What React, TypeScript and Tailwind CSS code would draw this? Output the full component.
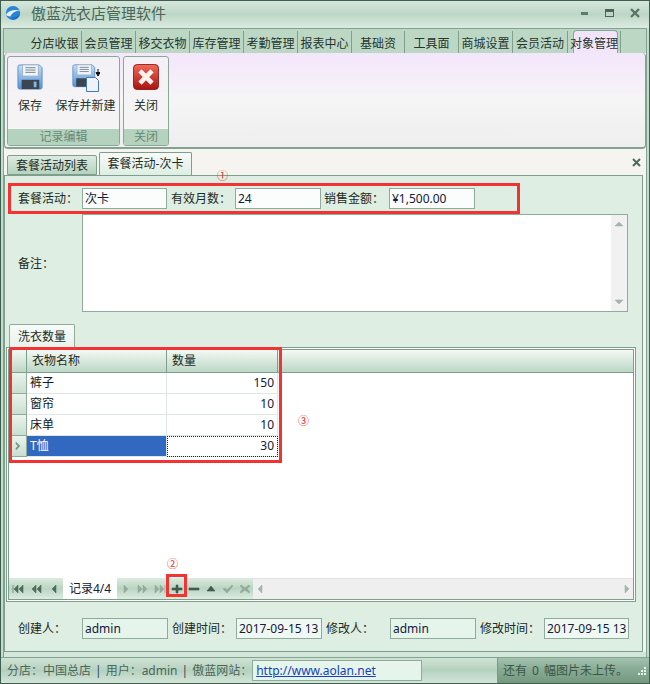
import React from "react";

const font = { fontFamily: '"Noto Sans","Noto Sans CJK SC",sans-serif' };

const menus: { t: string; w: string }[] = [
  { t: "分店收银", w: "w-[54px]" },
  { t: "会员管理", w: "w-[54px]" },
  { t: "移交衣物", w: "w-[54px]" },
  { t: "库存管理", w: "w-[54px]" },
  { t: "考勤管理", w: "w-[54px]" },
  { t: "报表中心", w: "w-[54px]" },
  { t: "基础资", w: "w-[53px]" },
  { t: "工具面", w: "w-[54px]" },
  { t: "商城设置", w: "w-[54px]" },
  { t: "会员活动", w: "w-[55px]" },
];

function Floppy() {
  return (
    <>
      <path d="M1 3a2 2 0 0 1 2-2h21l3 3v21a2 2 0 0 1-2 2H3a2 2 0 0 1-2-2z" fill="url(#sv)" stroke="#5b8fc8" />
      <rect x="6" y="1" width="17" height="12" fill="#f2f5f8" stroke="#9db4c8" />
      <path d="M9 4h11M9 6.500h11M9 9h11" stroke="#6d7b88" />
      <rect x="5" y="17" width="19" height="10" fill="#3b4650" />
      <rect x="18" y="19" width="3" height="6" fill="#8ab6e2" />
    </>
  );
}

function Grad() {
  return (
    <defs>
      <linearGradient id="sv" x1="0" y1="0" x2="0" y2="1">
        <stop offset="0" stopColor="#c6def6" />
        <stop offset="1" stopColor="#4f93dc" />
      </linearGradient>
    </defs>
  );
}

function Save() {
  return (
    <svg width="26" height="26" viewBox="0 0 28 28" className="block">
      <Grad />
      <Floppy />
    </svg>
  );
}

function SaveNew() {
  return (
    <svg width="28" height="28" viewBox="0 0 28 28" className="block">
      <Grad />
      <g transform="scale(0.84)">
        <Floppy />
      </g>
      <path d="M14.500 13.500h9l3 3v11h-12z" fill="#eef3fa" stroke="#4877b8" />
      <path d="M26 5v5M24 8.500l2 3.500 2-3.500z" stroke="#111" fill="#111" />
    </svg>
  );
}

function CloseIcon() {
  return (
    <svg width="26" height="26" viewBox="0 0 28 28" className="block">
      <defs>
        <linearGradient id="rd" x1="0" y1="0" x2="0" y2="1">
          <stop offset="0" stopColor="#ef6a5a" />
          <stop offset="1" stopColor="#a81410" />
        </linearGradient>
      </defs>
      <rect x="0.500" y="0.500" width="27" height="27" rx="4" fill="url(#rd)" stroke="#8c1c16" />
      <path d="M7.500 7.500l13 13M20.500 7.500l-13 13" stroke="#fdf3ee" strokeWidth="5" />
    </svg>
  );
}

function Field({ v, w = "w-[85px]", bg = "bg-[#fbfdfc]" }: { v: string; w?: string; bg?: string }) {
  return (
    <div className={`${w} ${bg} h-[21px] shrink-0 border border-[#8fab9a] pl-[2px] text-[12px] leading-[19px] text-[#10203a] overflow-hidden whitespace-nowrap`}>
      {v}
    </div>
  );
}

function Label({ t, w }: { t: string; w: string }) {
  return <div className={`${w} shrink-0 text-[12px] leading-[21px] text-[#1c2a22] whitespace-nowrap`}>{t}</div>;
}

function Tri({ d, c = "#4c6d5a" }: { d: string; c?: string }) {
  return (
    <svg width="12" height="10" viewBox="0 0 12 10" className="block">
      <path d={d} fill={c} stroke={c} strokeWidth="0.600" />
    </svg>
  );
}

function NavBtn({ d, c, w = "w-[17px]" }: { d: string; c?: string; w?: string }) {
  return (
    <div className={`${w} h-full flex items-center justify-center`}>
      <Tri d={d} c={c} />
    </div>
  );
}

const navGreen = "bg-gradient-to-b from-[#dcecdf] via-[#b9d4c2] to-[#dcecdf]";

function RibbonGroup({ w, caption, children }: { w: string; caption: string; children: React.ReactNode }) {
  return (
    <div className={`${w} h-[90px] flex flex-col rounded-[3px] border border-[#8aa896] overflow-hidden bg-gradient-to-b from-[#f3f1f6] to-[#f6f5f4]`}>
      <div className="flex-1 flex">{children}</div>
      <div className="h-[16px] bg-[#b5d2be] text-center text-[12px] leading-[16px] text-[#688a77]">{caption}</div>
    </div>
  );
}

function RibbonBtn({ w, label, children }: { w: string; label: string; children: React.ReactNode }) {
  return (
    <div className={`${w} flex flex-col items-center pt-[7px]`}>
      <div className="h-[26px]">{children}</div>
      <div className="mt-[7px] text-[12px] leading-[18px] text-[#26332c] whitespace-nowrap">{label}</div>
    </div>
  );
}

function Row({ name, qty, active }: { name: string; qty: string; active?: boolean }) {
  return (
    <div className="flex h-[21px]">
      <div className="w-[18px] shrink-0 border-r border-b border-[#8faa99] bg-gradient-to-b from-[#eaf3ec] to-[#c9dfd0] flex items-center justify-center">
        {active && <Tri d="M4 1l4 4-4 4V7l2-2-2-2z" c="#7b9c88" />}
      </div>
      <div className={`w-[140px] shrink-0 border-r border-b border-[#dde8e0] pl-[3px] text-[12px] leading-[20px] ${active ? "bg-[#3168c0] text-white" : "bg-white text-[#14201a]"}`}>
        {name}
      </div>
      <div className={`w-[111px] shrink-0 border-b border-r border-[#dde8e0] pr-[3px] text-right text-[12px] leading-[20px] text-[#10203a] ${active ? "outline-1 outline-dotted -outline-offset-1 outline-[#222]" : ""}`}>
        {qty}
      </div>
    </div>
  );
}

export default function App() {
  return (
    <div style={font} className="relative w-[650px] h-[684px] flex flex-col border border-[#3f5e50] bg-[#c3dccb] overflow-hidden">
      {/* title bar */}
      <div className="h-[27px] shrink-0 flex items-center pb-[3px] bg-gradient-to-b from-[#d6e7dc] via-[#bcd6c5] to-[#dcebe1]">
        <svg width="16" height="16" viewBox="0 0 18 18" className="ml-[4px] block">
          <circle cx="9" cy="9" r="8" fill="#2a85d6" />
          <path d="M1 11C4 6 10 5 17 6 11 7 8 9 6 13 4 13 2 12 1 11z" fill="#e8f2f6" />
          <path d="M7 14c4 0 7-1 10-5-1 5-5 8-9 7z" fill="#1e6fc0" />
        </svg>
        <div className="ml-[10px] text-[15px] leading-[20px] text-[#4a6659]">傲蓝洗衣店管理软件</div>
        <div className="ml-auto flex items-center pr-[2px]">
          <div className="w-[25px] flex justify-center"><div className="w-[7px] h-[3px] bg-[#5f7a6c]" /></div>
          <div className="w-[25px] flex justify-center"><div className="w-[9px] h-[8px] border border-t-[3px] border-[#4b6658]" /></div>
          <div className="w-[25px] flex justify-center">
            <svg width="10" height="10" viewBox="0 0 10 10"><path d="M1 1l8 8M9 1L1 9" stroke="#5a7567" strokeWidth="2.400" /></svg>
          </div>
        </div>
      </div>

      {/* body */}
      <div className="flex-1 min-h-0 flex flex-col mx-[2px] border-x border-t border-[#82a391] bg-[#f6f4f0]">
        {/* menu tabs */}
        <div className="h-[24px] shrink-0 flex bg-[#bcd8c5] pl-[24px] pt-[2px]">
          {menus.map((m) => (
            <div key={m.t} className={`${m.w} h-[22px] border-r border-[#7fa08d] text-center text-[12px] leading-[25px] text-[#27352d] whitespace-nowrap`}>
              {m.t}
            </div>
          ))}
          <div className="w-[45px] ml-[5px] -mt-[1px] h-[23px] rounded-t-[4px] border border-b-0 border-[#8aa896] bg-gradient-to-b from-[#f0e3fa] to-[#f3e6fb] text-center text-[12px] leading-[26px] text-[#27352d] whitespace-nowrap">
            <span className="-ml-[4px]">对象管理</span>
          </div>
          <div className="h-[22px] w-[3px] border-r border-[#7fa08d]" />
        </div>

        {/* ribbon */}
        <div className="h-[96px] shrink-0 flex gap-[3px] pt-[3px] pl-[2px] rounded-[4px] border border-t-0 border-b-2 border-[#82a391] bg-gradient-to-b from-[#f3e6fb] via-[#f6f5f6] to-[#eeeeee]">
          <RibbonGroup w="w-[113px]" caption="记录编辑">
            <RibbonBtn w="w-[44px]" label="保存"><Save /></RibbonBtn>
            <RibbonBtn w="w-[67px]" label="保存并新建"><SaveNew /></RibbonBtn>
          </RibbonGroup>
          <RibbonGroup w="w-[46px]" caption="关闭">
            <RibbonBtn w="w-[44px]" label="关闭"><CloseIcon /></RibbonBtn>
          </RibbonGroup>
        </div>

        {/* doc tabs */}
        <div className="h-[26px] shrink-0 flex items-end pl-[3px]">
          <div className="w-[90px] h-[20px] rounded-t-[2px] border border-[#7f9f8d] bg-gradient-to-b from-[#dcebe0] to-[#b6d2bf] text-center text-[12px] leading-[19px] text-[#1f2c25]">套餐活动列表</div>
          <div className="w-[93px] h-[23px] ml-[2px] rounded-t-[2px] border border-b-0 border-[#7f9f8d] bg-gradient-to-b from-[#f7faf8] to-[#deeee3] text-center text-[12px] leading-[22px] text-[#1f2c25]">套餐活动-次卡</div>
          <svg width="9" height="9" viewBox="0 0 9 9" className="ml-auto mr-[5px] mb-[8px]"><path d="M1 1l7 7M8 1L1 8" stroke="#4c6b5b" strokeWidth="2" /></svg>
        </div>

        {/* doc pane */}
        <div className="flex-1 min-h-0 mr-[3px] border border-[#7f9f8d] bg-[#deeee3] flex flex-col">
          {/* row 1 */}
          <div className="h-[38px] shrink-0 flex items-start pl-[13px] pt-[12px]">
            <Label t="套餐活动：" w="w-[64px]" />
            <Field v="次卡" />
            <Label t="有效月数：" w="w-[68px] pl-[4px]" />
            <Field v="24" w="w-[86px]" />
            <Label t="销售金额：" w="w-[68px] pl-[3px]" />
            <Field v="¥1,500.00" w="w-[86px]" />
          </div>
          {/* notes */}
          <div className="h-[98px] shrink-0 flex items-center pl-[13px]">
            <Label t="备注：" w="w-[64px]" />
            <div className="w-[546px] h-[98px] border border-[#8fab9a] bg-white flex justify-end">
              <div className="w-[16px] h-full bg-[#f1f1f1] flex flex-col items-center justify-between py-[4px]">
                <Tri d="M2 7l4-4 4 4z" c="#a4b5aa" />
                <Tri d="M2 3l4 4 4-4z" c="#a4b5aa" />
              </div>
            </div>
          </div>
          {/* sub-tab */}
          <div className="h-[23px] mt-[12px] shrink-0 pl-[4px]">
            <div className="w-[66px] h-[23px] rounded-t-[2px] border border-b-0 border-[#8fab9a] bg-gradient-to-b from-[#f7faf8] to-[#e9f3ec] text-center text-[12px] leading-[23px] text-[#1c2a22]">洗衣数量</div>
          </div>
          {/* grid */}
          <div className="h-[255px] shrink-0 ml-[1px] w-[630px] border-[3px] border-double border-[#7f9f8d] bg-white flex flex-col">
            <div className="h-[23px] shrink-0 flex border-b border-[#7f9f8d] bg-gradient-to-b from-[#f4f9f5] to-[#bcd7c5]">
              <div className="w-[18px] border-r border-[#7f9f8d]" />
              <div className="w-[140px] border-r border-[#7f9f8d] pl-[5px] text-[12px] leading-[22px] text-[#1c2a22]">衣物名称</div>
              <div className="w-[111px] border-r border-[#7f9f8d] pl-[5px] text-[12px] leading-[22px] text-[#1c2a22]">数量</div>
            </div>
            <Row name="裤子" qty="150" />
            <Row name="窗帘" qty="10" />
            <Row name="床单" qty="10" />
            <Row name="T恤" qty="30" active />
            <div className="flex-1" />
            {/* navigator */}
            <div className="h-[21px] shrink-0 flex">
              <div className={`flex h-full items-center ${navGreen} w-[54px]`}>
                <NavBtn w="w-[18px]" d="M1 1v8M6 1L2 5l4 4zM11 1L7 5l4 4z" />
                <NavBtn w="w-[18px]" d="M6 1L2 5l4 4zM11 1L7 5l4 4z" />
                <NavBtn w="w-[18px]" d="M8 1L4 5l4 4z" />
              </div>
              <div className="w-[54px] bg-white text-[12px] leading-[21px] text-center text-[#10203a]">记录4/4</div>
              <div className={`flex h-full items-center ${navGreen} w-[136px]`}>
                <NavBtn d="M4 1l4 4-4 4z" c="#94ab9c" />
                <NavBtn d="M1 1l4 4-4 4zM6 1l4 4-4 4z" c="#94ab9c" />
                <NavBtn d="M1 1l4 4-4 4zM6 1l4 4-4 4zM11 1v8" c="#94ab9c" />
                <NavBtn d="M5 1h2v3h4v2H7v3H5V6H1V4h4z" c="#3f5c4d" />
                <NavBtn d="M1 4h10v2H1z" c="#3f5c4d" />
                <NavBtn d="M6 2l4 5H2z" c="#3f5c4d" />
                <NavBtn d="M1 5l2-1 2 2 5-5 1 1-6 7z" c="#94ab9c" />
                <NavBtn d="M2 1l4 3 4-3 1 1-3 3 3 3-1 1-4-3-4 3-1-1 3-3-3-3z" c="#94ab9c" />
              </div>
              <div className="flex-1 flex items-center justify-between bg-[#efefef] border-t border-[#e3e3e3] pl-[1px]">
                <Tri d="M8 1L4 5l4 4z" c="#a4b5aa" />
                <Tri d="M4 1l4 4-4 4z" c="#a4b5aa" />
              </div>
            </div>
          </div>
          {/* audit row */}
          <div className="flex-1 flex items-start pl-[13px] pt-[16px]">
            <Label t="创建人：" w="w-[64px]" />
            <Field v="admin" w="w-[86px]" bg="bg-[#e6f5ec]" />
            <Label t="创建时间：" w="w-[68px] pl-[4px]" />
            <Field v="2017-09-15 13" w="w-[86px]" bg="bg-[#f0f8f3]" />
            <Label t="修改人：" w="w-[68px] pl-[4px]" />
            <Field v="admin" w="w-[86px]" bg="bg-[#e6f5ec]" />
            <Label t="修改时间：" w="w-[68px] pl-[4px]" />
            <Field v="2017-09-15 13" w="w-[85px]" bg="bg-[#f0f8f3]" />
          </div>
        </div>
        <div className="h-[5px] shrink-0 bg-[#d3e6d9]" />
      </div>

      {/* status bar */}
      <div className="h-[26px] shrink-0 flex items-center border-t border-[#82a391] bg-gradient-to-b from-[#cfe3d5] via-[#b4d1be] to-[#d3e6d9] pl-[6px] text-[12px] text-[#4b6658] whitespace-nowrap">
        <span>分店：中国总店</span>
        <span className="mx-[4px] text-[#333d55]">|</span>
        <span>用户：admin</span>
        <span className="mx-[4px] text-[#333d55]">|</span>
        <span>傲蓝网站：</span>
        <div className="w-[170px] h-[21px] border border-[#8fab9a] bg-[#e6f5ec] pl-[3px] leading-[19px] text-[#1540c0] underline">http://www.aolan.net</div>
        <div className="ml-auto w-[152px] h-full flex items-center justify-between border-l border-[#7a9b88] bg-gradient-to-b from-[#a3c2ae] via-[#86a992] to-[#74997f] pl-[5px] pr-[3px] text-[#3a5647] [word-spacing:2px]">
          <span>还有 0 幅图片未上传。</span>
          <svg width="10" height="12" viewBox="0 0 10 12"><path d="M8 2h2v2H8zM5 5h2v2H5zM8 5h2v2H8zM2 8h2v2H2zM5 8h2v2H5zM8 8h2v2H8z" fill="#e8f2ec" /></svg>
        </div>
      </div>

      {/* annotations */}
      <div className="absolute left-[7px] top-[182px] w-[512px] h-[31px] border-[3px] border-[#f33333]" />
      <div className="absolute left-[8px] top-[346px] w-[273px] h-[116px] border-[3px] border-[#f33333]" />
      <div className="absolute left-[165px] top-[573px] w-[21px] h-[23px] border-[3px] border-[#f33333]" />
      <div className="absolute left-[216px] top-[169px] text-[11px] leading-[12px] text-[#e22]">①</div>
      <div className="absolute left-[166px] top-[557px] text-[11px] leading-[12px] text-[#e22]">②</div>
      <div className="absolute left-[297px] top-[414px] text-[11px] leading-[12px] text-[#e22]">③</div>
    </div>
  );
}
